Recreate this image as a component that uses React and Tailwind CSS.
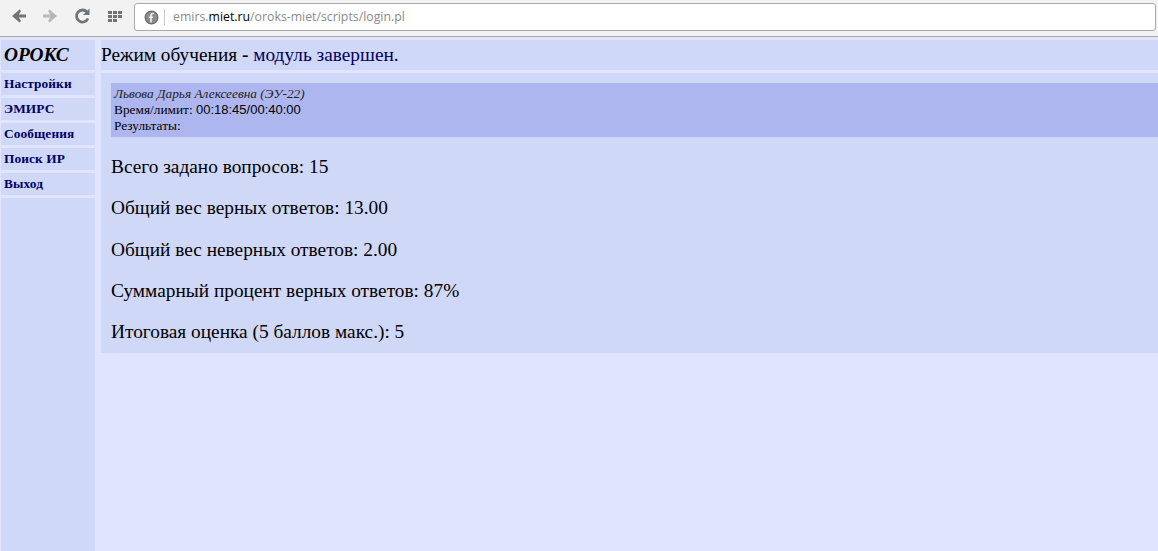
const serif = "font-['Liberation_Serif','Times_New_Roman',serif]";

const NAV_ITEMS = ["Настройки", "ЭМИРС", "Сообщения", "Поиск ИР", "Выход"];

const STATS = [
  "Всего задано вопросов: 15",
  "Общий вес верных ответов: 13.00",
  "Общий вес неверных ответов: 2.00",
  "Суммарный процент верных ответов: 87%",
  "Итоговая оценка (5 баллов макс.): 5",
];

function BrowserBar() {
  return (
    <div className="flex h-[37px] items-start border-b border-[#a9a9a9] bg-[#f2f2f2]">
      <div className="flex h-[32px] w-[134px] shrink-0 items-center">
        <svg width="134" height="32" viewBox="0 0 134 32">
          <path d="M26 16H17" fill="none" stroke="#6f7478" strokeWidth="3" />
          <path d="M12 16l7.500-6.500 1.500 1.500-3 5 3 5-1.500 1.500z" fill="#6f7478" />
          <path d="M43 16h9" fill="none" stroke="#b8b8b8" strokeWidth="3" />
          <path d="M57 16l-7.500-6.500-1.500 1.500 3 5-3 5 1.500 1.500z" fill="#b8b8b8" />
          <path d="M88 18.500A6 6 0 1 1 87 12" fill="none" stroke="#6f7478" strokeWidth="2.800" />
          <path d="M89.500 8.500V15H83z" fill="#6f7478" />
          <path d="M108 11h4v3h-4zM113 11h4v3h-4zM118 11h4v3h-4zM108 15h4v3h-4zM113 15h4v3h-4zM118 15h4v3h-4zM108 19h4v3h-4zM113 19h4v3h-4z" fill="#6f7478" />
        </svg>
      </div>
      <div className="mt-[3px] mr-[2px] flex h-[28px] flex-1 items-center rounded-[3px] border border-[#a9a9a9] bg-white">
        <svg className="ml-[9px]" width="15" height="15" viewBox="0 0 15 15">
          <circle cx="7.500" cy="7.500" r="6.300" fill="#8c8c8c" stroke="#6f6f6f" strokeWidth="1.400" />
          <path d="M10 3.500H8.500C7.300 3.500 7 4.300 7 5.200V12.500M5 7.300h4" fill="none" stroke="#f2f2f2" strokeWidth="1.600" />
        </svg>
        <div className="ml-[5px] h-[16px] w-px bg-[#c8c8c8]" />
        <div className="ml-[8px] font-['Open_Sans',sans-serif] text-[12.300px] text-[#8a8a8a]">
          emirs.<span className="text-black">miet.ru</span>/oroks-miet/scripts/login.pl
        </div>
      </div>
    </div>
  );
}

function Sidebar() {
  return (
    <div className="flex w-[94px] shrink-0 flex-col gap-[3px]">
      <div className={`h-[30px] bg-[#d0d8f8] pl-[3px] text-[19.330px] font-bold italic leading-[30px] text-black ${serif}`}>ОРОКС</div>
      {NAV_ITEMS.map((item) => (
        <div key={item} className={`h-[22px] bg-[#d0d8f8] pl-[3px] text-[13.330px] font-bold leading-[22px] tracking-[0.1px] text-[#000066] ${serif}`}>
          {item}
        </div>
      ))}
      <div className="flex-1 bg-[#d0d8f8]" />
    </div>
  );
}

function Results() {
  return (
    <div className="flex flex-1 flex-col gap-[3px]">
      <div className={`h-[30px] bg-[#d0d8f8] text-[19.330px] leading-[30px] text-black ${serif}`}>
        Режим обучения <b>-</b> <span className="text-[#000066]">модуль завершен.</span>
      </div>
      <div className={`h-[280px] bg-[#d0d8f8] pl-[10px] pt-[10px] text-black ${serif}`}>
        <div className="mb-[19px] h-[54px] bg-[#aeb6f0] pl-[3px] pt-[3px] text-[13.330px] leading-[16px]">
          <div className="italic text-[#222222]">Львова Дарья Алексеевна (ЭУ-22)</div>
          <div>
            Время/лимит: <span className="font-['Liberation_Sans',Arial,sans-serif] text-[13px]">00:18:45/00:40:00</span>
          </div>
          <div>Результаты:</div>
        </div>
        <div className="flex flex-col gap-[19px]">
          {STATS.map((line) => (
            <div key={line} className="text-[19.330px] leading-[22.300px]">{line}</div>
          ))}
        </div>
      </div>
    </div>
  );
}

export default function App() {
  return (
    <div className="flex h-[551px] w-[1158px] flex-col overflow-hidden bg-[#e0e4ff]">
      <BrowserBar />
      <div className="flex flex-1 gap-[6px] pl-px pt-[3px]">
        <Sidebar />
        <Results />
      </div>
    </div>
  );
}
